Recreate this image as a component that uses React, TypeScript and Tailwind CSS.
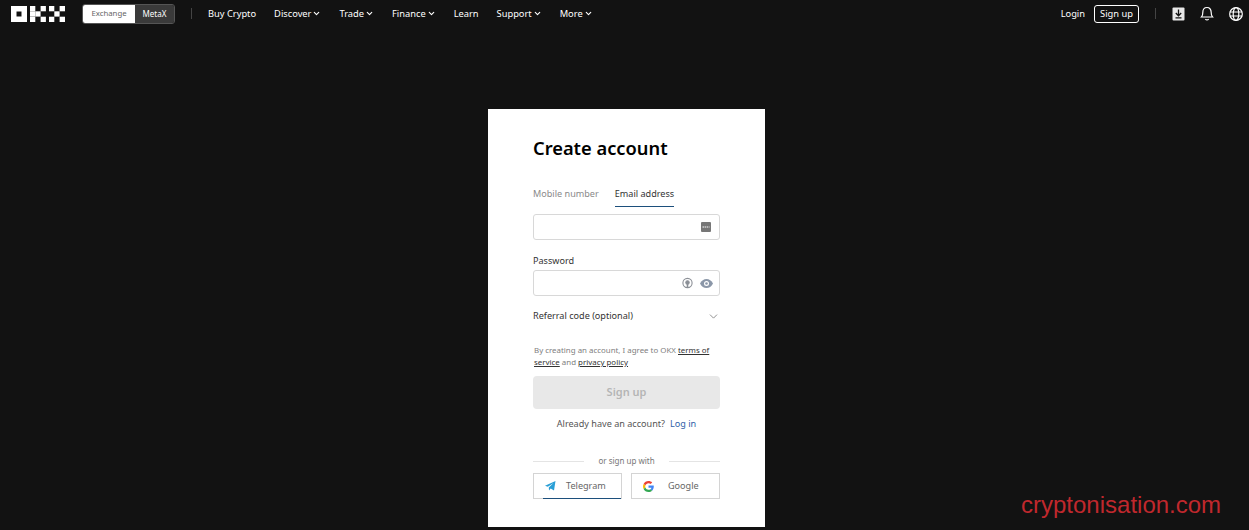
import React from "react";
import { ChevronDown } from "lucide-react";

const font = "font-['Noto_Sans',sans-serif]";

const navItems = [
  { label: "Buy Crypto", menu: false },
  { label: "Discover", menu: true },
  { label: "Trade", menu: true },
  { label: "Finance", menu: true },
  { label: "Learn", menu: false },
  { label: "Support", menu: true },
  { label: "More", menu: true },
];

const Logo = () => (
  <svg width="54" height="16" viewBox="0 0 54 16" fill="#fff">
    <path fillRule="evenodd" d="M0 0h16v16H0zM5.500 5.500v5h5v-5z" />
    <rect x="19" y="0" width="5.300" height="5.300" />
    <rect x="19" y="5.300" width="5.300" height="5.300" />
    <rect x="19" y="10.700" width="5.300" height="5.300" />
    <rect x="24.300" y="5.300" width="5.300" height="5.300" />
    <rect x="29.600" y="0" width="5.300" height="5.300" />
    <rect x="29.600" y="10.700" width="5.300" height="5.300" />
    <rect x="38" y="0" width="5.300" height="5.300" />
    <rect x="38" y="10.700" width="5.300" height="5.300" />
    <rect x="43.300" y="5.300" width="5.300" height="5.300" />
    <rect x="48.600" y="0" width="5.400" height="5.300" />
    <rect x="48.600" y="10.700" width="5.400" height="5.300" />
  </svg>
);

const NavBar = () => (
  <header className="flex h-[27px] items-center pl-[11px] pr-[6px] text-[9.300px] text-white">
    <Logo />
    <div className="ml-[17px] flex h-[20px] w-[93px] overflow-hidden rounded-[3px] border border-[#555]">
      <div className="flex w-[52px] items-center justify-center bg-white text-[7.800px] text-[#666]">Exchange</div>
      <div className="flex flex-1 items-center justify-center bg-[#3a3a3a] text-[8px] text-white">MetaX</div>
    </div>
    <div className="ml-[16px] h-[11px] w-px bg-[#444]" />
    <nav className="ml-[16px] flex items-center gap-[18px]">
      {navItems.map((item) => (
        <span key={item.label} className="flex items-center gap-[1px]">
          {item.label}
          {item.menu && <ChevronDown size={9} strokeWidth={3} />}
        </span>
      ))}
    </nav>
    <div className="ml-auto flex items-center">
      <span>Login</span>
      <span className="ml-[9px] flex h-[18px] w-[45px] items-center justify-center rounded-[3px] border border-white">Sign up</span>
      <div className="ml-[16px] h-[11px] w-px bg-[#444]" />
      <svg className="ml-[16px]" width="13" height="14" viewBox="0 0 13 14" fill="none">
        <rect x="0.500" y="0.500" width="12" height="13" rx="1" fill="#e8e8e8" />
        <path d="M6.500 2.500v6M3.800 6l2.700 2.800L9.200 6M3.500 10.800h6" stroke="#121212" strokeWidth="1.300" />
      </svg>
      <svg className="ml-[15px]" width="14" height="15" viewBox="0 0 14 15" fill="none" stroke="#fff" strokeWidth="1.200">
        <path d="M1.500 11c1-1 1.300-2 1.300-4.500C2.800 3.500 4.500 1.500 7 1.500s4.200 2 4.200 5c0 2.500.3 3.500 1.300 4.500z" />
        <path d="M5.300 13.200c1 .8 2.400.8 3.400 0" />
      </svg>
      <svg className="ml-[15px]" width="14" height="14" viewBox="0 0 14 14" fill="none" stroke="#fff" strokeWidth="1.200">
        <circle cx="7" cy="7" r="6.300" />
        <ellipse cx="7" cy="7" rx="2.800" ry="6.300" />
        <path d="M.7 5h12.600M.7 9h12.600" />
      </svg>
    </div>
  </header>
);

const Field = ({ children }: { children: React.ReactNode }) => (
  <div className="flex h-[26px] items-center justify-end gap-[7px] rounded-[3px] border border-[#d8d8d8] pr-[6px]">
    {children}
  </div>
);

const SignUpCard = () => (
  <section className="ml-[488px] mt-[82px] flex h-[418px] w-[277px] flex-col bg-white px-[45px] pt-[27px] text-[#333]">
    <h1 className="text-[18.300px] font-semibold leading-[24px] text-black">Create account</h1>
    <div className="mt-[27px] flex gap-[16px] text-[9.100px] leading-[14px]">
      <span className="text-[#8a8a8a]">Mobile number</span>
      <span className="border-b border-[#1c4f7c] pb-[5px] text-[#333]">Email address</span>
    </div>
    <div className="mt-[7px]">
      <Field>
        <svg className="mr-[2px]" width="10" height="10" viewBox="0 0 10 10">
          <rect width="10" height="10" rx="1" fill="#777" />
          <path d="M1.500 5h7" stroke="#fff" strokeWidth="1" strokeDasharray="1.500 .6" />
        </svg>
      </Field>
    </div>
    <label className="mt-[14px] text-[9.100px] leading-[14px]">Password</label>
    <div className="mt-[2px]">
      <Field>
        <svg width="11" height="12" viewBox="0 0 11 12" fill="none" stroke="#8b8f96" strokeWidth="1.100">
          <circle cx="5.500" cy="6" r="4.600" />
          <circle cx="5.500" cy="5.400" r="1.700" fill="#8b8f96" />
          <path d="M5.500 6v5" strokeWidth="1.600" />
        </svg>
        <svg width="13" height="9" viewBox="0 0 13 9">
          <path d="M0 4.500C1.500 1.500 3.800 0 6.500 0S11.500 1.500 13 4.500C11.500 7.500 9.200 9 6.500 9S1.500 7.500 0 4.500z" fill="#8b97a8" />
          <circle cx="6.500" cy="4.500" r="2.500" fill="#fff" />
          <circle cx="6.500" cy="4.500" r="1.300" fill="#8b97a8" />
        </svg>
      </Field>
    </div>
    <div className="mt-[13px] flex items-center justify-between text-[9.100px] leading-[14px]">
      <span>Referral code (optional)</span>
      <ChevronDown size={13} strokeWidth={1.500} color="#777" />
    </div>
    <p className="mt-[21px] pl-px text-[7.900px] leading-[12px] text-[#808080]">
      By creating an account, I agree to OKX <span className="text-[#333] underline">terms of</span>{" "}
      <span className="text-[#333] underline">service</span> and{" "}
      <span className="text-[#333] underline">privacy policy</span>
    </p>
    <button className="mt-[8px] h-[33px] rounded-[4px] bg-[#e8e8e8] text-[11px] font-semibold text-[#b5b5b5]">Sign up</button>
    <p className="mt-[8px] flex justify-center gap-[5px] text-[9.100px] leading-[14px] text-[#555]">
      Already have an account? <span className="text-[#2f5fa8]">Log in</span>
    </p>
    <div className="mt-[24px] flex items-center gap-[14px] text-[8px] leading-[12px] text-[#777]">
      <div className="h-px flex-1 bg-[#e4e4e4]" />
      or sign up with
      <div className="h-px flex-1 bg-[#e4e4e4]" />
    </div>
    <div className="mt-[6px] flex gap-[9px] text-[9.100px] text-[#666]">
      <div className="relative flex h-[26px] flex-1 items-center gap-[10px] border border-[#d4d4d4] pl-[11px]">
        <svg width="11" height="10" viewBox="0 0 11 10">
          <path d="M0 4.700 10.500 0 9 9.500 5.700 7.500 4 9.500 3.800 6.500 8.500 2 2.800 5.800z" fill="#2a9fd6" />
        </svg>
        Telegram
        <div className="absolute -bottom-px left-[9px] right-0 h-px bg-[#1c4f7c]" />
      </div>
      <div className="flex h-[26px] flex-1 items-center gap-[14px] border border-[#d4d4d4] pl-[11px]">
        <svg width="11" height="11" viewBox="0 0 48 48">
          <path fill="#EA4335" d="M24 9.500c3.500 0 6.700 1.200 9.200 3.600l6.900-6.900C35.900 2.400 30.500 0 24 0 14.600 0 6.500 5.400 2.600 13.200l8 6.200C12.500 13.700 17.800 9.500 24 9.500z" />
          <path fill="#4285F4" d="M47 24.500c0-1.600-.1-3.100-.4-4.500H24v9h12.900c-.6 3-2.200 5.500-4.700 7.200l7.700 6C44.400 37.600 47 31.600 47 24.500z" />
          <path fill="#FBBC05" d="M10.500 28.600c-.5-1.400-.8-3-.8-4.600s.3-3.200.8-4.600l-8-6.200C.9 16.500 0 20.100 0 24s.9 7.500 2.600 10.800z" />
          <path fill="#34A853" d="M24 48c6.500 0 11.900-2.100 15.900-5.800l-7.700-6c-2.200 1.500-4.900 2.300-8.200 2.300-6.200 0-11.500-4.200-13.400-9.900l-8 6.200C6.500 42.600 14.600 48 24 48z" />
        </svg>
        Google
      </div>
    </div>
  </section>
);

export default function App() {
  return (
    <div className={`relative h-[530px] overflow-hidden bg-[#121212] ${font}`}>
      <NavBar />
      <SignUpCard />
      <span className="absolute left-[1021px] top-[491px] font-['Liberation_Sans',sans-serif] text-[24px] leading-[28px] text-[#c0282d]">
        cryptonisation.com
      </span>
    </div>
  );
}
